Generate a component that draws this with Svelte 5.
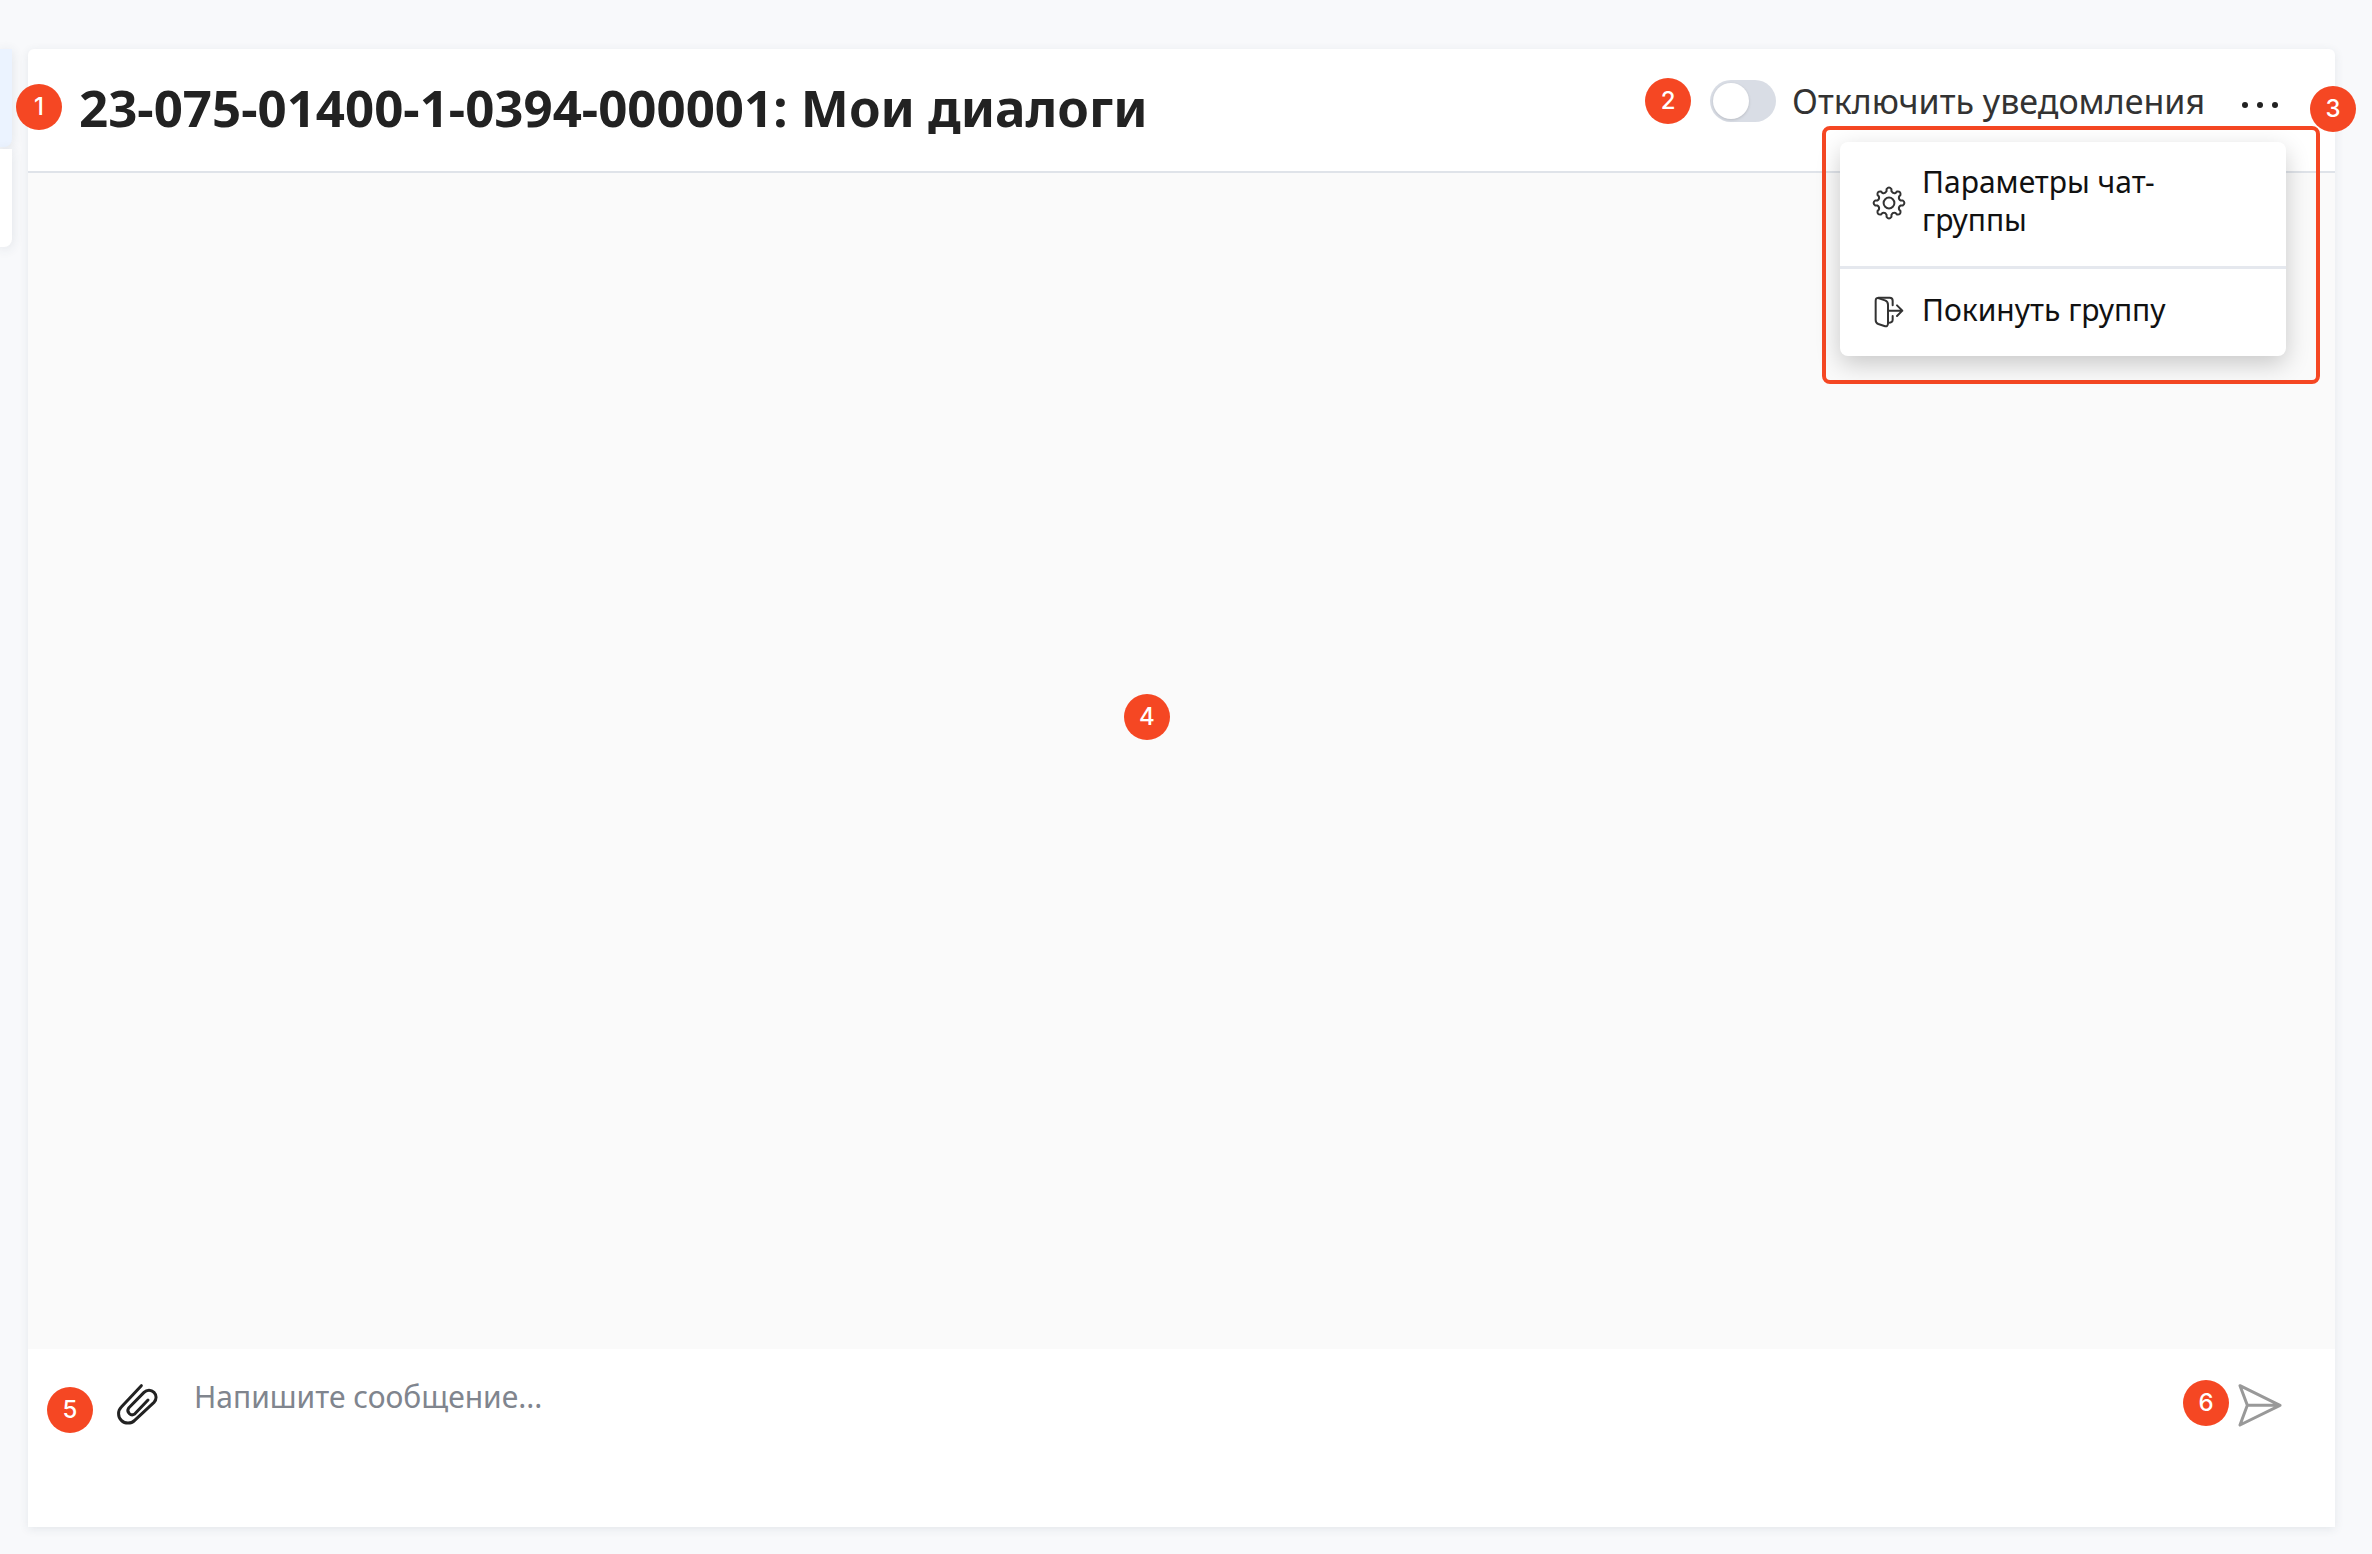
<script>
  let muted = $state(false);
  let message = $state('');

  // Outline of an eight-tooth gear centred on the origin
  const polar = (r, deg) => {
    const a = (deg * Math.PI) / 180;
    return `${(r * Math.cos(a)).toFixed(2)} ${(r * Math.sin(a)).toFixed(2)}`;
  };
  const gear =
    Array.from({ length: 8 }, (_, i) => {
      const a = i * 45;
      return `${i ? 'L' : 'M'}${polar(14, a - 10)} Q${polar(17, a)} ${polar(14, a + 10)} L${polar(12, a + 12)} Q${polar(10, a + 22.5)} ${polar(12, a + 33)}`;
    }).join(' ') + ' Z';
</script>

<div class="page">
  <aside class="dialogs" aria-label="Диалоги">
    <div class="dialog active"></div>
    <div class="dialog"></div>
  </aside>

  <main class="chat">
    <header class="head">
      <span class="badge b1">1</span>
      <h1>23-075-01400-1-0394-000001: Мои диалоги</h1>
      <div class="tools">
        <span class="badge">2</span>
        <label class="mute">
          <input type="checkbox" role="switch" bind:checked={muted} />
          <span>Отключить уведомления</span>
        </label>
        <button class="more" type="button" aria-label="Ещё">
          <svg viewBox="0 0 38 10" width="38" height="10"><circle cx="4" cy="5" r="3" /><circle cx="19" cy="5" r="3" /><circle cx="34" cy="5" r="3" /></svg>
        </button>
      </div>
      <span class="badge b3">3</span>
      <div class="frame">
        <div class="menu">
          <button type="button">
            <svg viewBox="-17 -17 34 34" width="34" height="34"><path d={gear} /><circle r="5.4" /></svg>
            <span>Параметры чат-группы</span>
          </button>
          <button type="button">
            <svg viewBox="69 433 102 102" width="34" height="34" class="wide">
              <path d="M80 450Q80 440 90 443L108 449Q117 452 117 462V518Q117 530 106 526L88 520Q80 517 80 508Z" />
              <path d="M88 441H122Q131 441 131 450V464M131 496V507Q131 516 118 516M120 480H160M144 464L160 480L144 496" />
            </svg>
            <span>Покинуть группу</span>
          </button>
        </div>
      </div>
    </header>

    <section class="messages"><span class="badge b4">4</span></section>

    <form class="composer" onsubmit={(e) => e.preventDefault()}>
      <span class="badge b5">5</span>
      <button type="button" class="attach" aria-label="Прикрепить файл">
        <svg viewBox="46 38 126 126" width="42" height="42"><path d="M122 46L62 110A28 28 0 0 0 102 150L160 96A21 21 0 0 0 130 66L84 113A13 13 0 0 0 102 131L142 89" /></svg>
      </button>
      <textarea aria-label="Сообщение" placeholder="Напишите сообщение..." bind:value={message}></textarea>
      <span class="badge b6">6</span>
      <button type="submit" class="send" aria-label="Отправить">
        <svg viewBox="262 190 132 132" width="44" height="44"><path d="M268 198L388 257L268 316L290 257ZM290 257H388" /></svg>
      </button>
    </form>
  </main>
</div>

<style>
  :global(body) {
    background: #f8f9fb;
  }
  .page {
    box-sizing: border-box;
    min-height: 100vh;
    display: flex;
    gap: 16px;
    padding: 49px 37px 27px 0;
    overflow: hidden;
    font-family: 'Noto Sans', 'Open Sans', sans-serif;
    color: #222;
  }
  button {
    border: 0;
    padding: 0;
    background: none;
    font: inherit;
    color: inherit;
    cursor: pointer;
  }
  svg {
    display: block;
    fill: none;
    stroke: #333;
    stroke-width: 2;
    stroke-linecap: round;
    stroke-linejoin: round;
  }
  .dialogs {
    width: 12px;
  }
  .dialog {
    height: 98px;
    margin-bottom: 2px;
    background: #fff;
    border-radius: 0 0 8px 0;
    box-shadow: 0 2px 12px rgba(50, 65, 90, 0.12);
  }
  .dialog.active {
    background: #ebf3ff;
  }
  .chat {
    flex: 1;
    display: flex;
    flex-direction: column;
    background: #fff;
    border-radius: 6px 6px 0 0;
    box-shadow: 0 2px 10px rgba(50, 65, 90, 0.1);
  }
  .head {
    position: relative;
    display: flex;
    justify-content: space-between;
    align-items: center;
    box-sizing: border-box;
    height: 124px;
    padding: 0 56px 6px 51px;
    border-bottom: 2px solid #dfe3e9;
  }
  h1 {
    margin: 0;
    font-size: 51px;
    line-height: 60px;
    font-weight: 700;
    white-space: nowrap;
  }
  .tools {
    display: flex;
    align-items: center;
    padding-bottom: 12px;
  }
  .mute {
    display: flex;
    align-items: center;
    gap: 16px;
    margin: 0 36px 0 19px;
    font-size: 34px;
    line-height: 44px;
    color: #333;
    white-space: nowrap;
  }
  input {
    appearance: none;
    display: flex;
    align-items: center;
    box-sizing: border-box;
    width: 66px;
    height: 42px;
    margin: 0;
    padding: 0 3px;
    border-radius: 21px;
    background: #d9dde5;
    cursor: pointer;
  }
  input::before {
    content: '';
    width: 36px;
    height: 36px;
    border-radius: 50%;
    background: #fff;
    box-shadow: 0 1px 3px rgba(0, 0, 0, 0.15);
  }
  input:checked {
    justify-content: flex-end;
    background: #3b82f6;
  }
  .more {
    padding-top: 8px;
  }
  .more svg {
    fill: #222;
    stroke: none;
  }
  .badge {
    flex: none;
    width: 46px;
    height: 46px;
    border-radius: 50%;
    background: #f54723;
    color: #fff;
    font: 500 24px/46px Inter, 'Liberation Sans', sans-serif;
    text-align: center;
  }
  .b1,
  .b3,
  .b4,
  .b5,
  .b6 {
    position: absolute;
  }
  .b1 {
    left: -12px;
    top: 35px;
  }
  .b3 {
    right: -21px;
    top: 37px;
    z-index: 3;
  }
  .frame {
    position: absolute;
    z-index: 2;
    top: 77px;
    right: 15px;
    box-sizing: border-box;
    width: 498px;
    padding: 12px 30px 24px 14px;
    border: 4px solid #f54723;
    border-radius: 8px;
  }
  .menu {
    background: #fff;
    border-radius: 8px;
    box-shadow: 0 8px 24px rgba(0, 0, 0, 0.2);
  }
  .menu button {
    display: flex;
    align-items: center;
    gap: 16px;
    box-sizing: border-box;
    width: 100%;
    height: 87px;
    padding: 0 80px 2px 32px;
    font-size: 30px;
    line-height: 38px;
    color: #111;
    text-align: left;
  }
  .menu button:first-child {
    height: 127px;
    border-bottom: 3px solid #e5e8ee;
  }
  .menu span {
    padding-bottom: 4px;
  }
  .menu svg {
    flex: none;
  }
  .menu .wide {
    stroke-width: 6;
  }
  .messages {
    flex: 1;
    position: relative;
    background: #fafafa;
  }
  .b4 {
    left: 48.5%;
    top: 46.3%;
    margin: -23px 0 0 -23px;
  }
  .composer {
    position: relative;
    display: flex;
    align-items: flex-start;
    box-sizing: border-box;
    height: 178px;
    padding: 28px 53px 28px 88px;
  }
  .b5 {
    left: 19px;
    top: 38px;
  }
  .b6 {
    right: 106px;
    top: 31px;
  }
  .attach,
  .send {
    flex: none;
    margin-top: 6px;
  }
  .attach svg {
    stroke: #222;
    stroke-width: 9;
  }
  .send svg {
    stroke: #999;
    stroke-width: 9;
  }
  textarea {
    flex: 1;
    align-self: stretch;
    margin: 0 80px 0 36px;
    padding: 0;
    border: 0;
    outline: 0;
    resize: none;
    background: none;
    color: #222;
    font: 30px/40px 'Noto Sans', 'Open Sans', sans-serif;
  }
  textarea::placeholder {
    color: #80858e;
    opacity: 1;
  }
</style>
